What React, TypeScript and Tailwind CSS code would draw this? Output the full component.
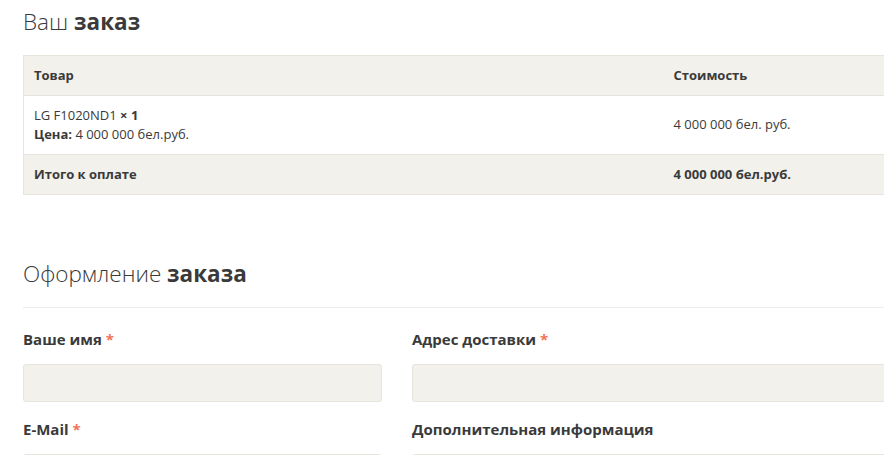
export default function App() {
  return (
    <div
      className="w-[884px] h-[455px] overflow-hidden bg-white text-[#3a3a3a]"
      style={{ fontFamily: '"Open Sans", "Liberation Sans", sans-serif' }}
    >
      <div className="w-[1137px] ml-[23px]">
        <h2 className="text-[22.5px] font-light leading-[30px] pt-[7px]">
          Ваш <span className="font-bold">заказ</span>
        </h2>

        <table className="mt-[18px] w-full border-collapse text-[13px] border border-[#e6e4dc]">
          <thead>
            <tr className="bg-[#f2f1eb] h-[40px]">
              <th className="text-left font-bold pl-[10px] w-[640px]">Товар</th>
              <th className="text-left font-bold pl-[10px]">Стоимость</th>
            </tr>
          </thead>
          <tbody>
            <tr className="h-[59px] border-t border-[#e6e4dc]">
              <td className="pl-[10px] leading-[19px]">
                LG F1020ND1 <span className="font-bold">× 1</span>
                <br />
                <span className="font-bold">Цена:</span> 4 000 000 бел.руб.
              </td>
              <td className="pl-[10px]">4 000 000 бел. руб.</td>
            </tr>
            <tr className="h-[40px] bg-[#f2f1eb] border-t border-[#e6e4dc]">
              <td className="pl-[10px] font-bold">Итого к оплате</td>
              <td className="pl-[10px] font-bold">4 000 000 бел.руб.</td>
            </tr>
          </tbody>
        </table>

        <h2 className="mt-[64px] text-[22.5px] font-light leading-[30px]">
          Оформление <span className="font-bold">заказа</span>
        </h2>
        <div className="mt-[18px] border-t border-[#ebebeb]" />

        <div className="mt-[21px] grid grid-cols-[359px_1fr] gap-x-[30px]">
          <Field label="Ваше имя" required />
          <Field label="Адрес доставки" required />
          <Field label="E-Mail" required />
          <Field label="Дополнительная информация" />
        </div>
      </div>
    </div>
  );
}

function Field({ label, required }: { label: string; required?: boolean }) {
  return (
    <div>
      <label className="block text-[15px] font-bold leading-[20px]">
        {label}
        {required && <span className="text-[#f2735b]"> *</span>}
      </label>
      <input
        className="mt-[15px] mb-[17px] block w-full h-[38px] rounded-[3px] bg-[#f2f1eb] border border-[#e6e4dc]"
        type="text"
      />
    </div>
  );
}
